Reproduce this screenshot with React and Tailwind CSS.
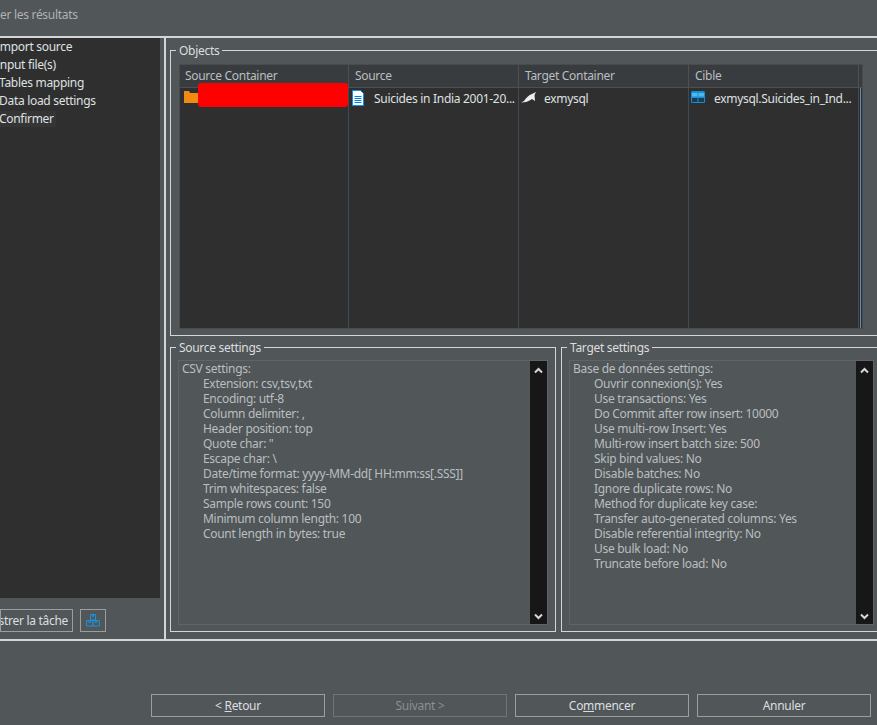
const sourceRows = [
  "Extension: csv,tsv,txt",
  "Encoding: utf-8",
  "Column delimiter: ,",
  "Header position: top",
  'Quote char: "',
  "Escape char: \\",
  "Date/time format: yyyy-MM-dd[ HH:mm:ss[.SSS]]",
  "Trim whitespaces: false",
  "Sample rows count: 150",
  "Minimum column length: 100",
  "Count length in bytes: true",
];

const targetRows = [
  "Ouvrir connexion(s): Yes",
  "Use transactions: Yes",
  "Do Commit after row insert: 10000",
  "Use multi-row Insert: Yes",
  "Multi-row insert batch size: 500",
  "Skip bind values: No",
  "Disable batches: No",
  "Ignore duplicate rows: No",
  "Method for duplicate key case:",
  "Transfer auto-generated columns: Yes",
  "Disable referential integrity: No",
  "Use bulk load: No",
  "Truncate before load: No",
];

const navItems = [
  { text: "Import source", classes: "-ml-[4px]" },
  { text: "Input file(s)", classes: "-ml-[4px]" },
  { text: "Tables mapping", classes: "-ml-[1px]" },
  { text: "Data load settings", classes: "-ml-[1px]" },
  { text: "Confirmer", classes: "-ml-[1px] pr-[2px] bg-[#353535]" },
];

const Chevron = ({ down }) => (
  <svg width="9" height="7" viewBox="0 0 9 7" className="shrink-0">
    <path
      d={down ? "M1 1.5l3.5 3.5L8 1.5" : "M1 5.5L4.5 2 8 5.5"}
      fill="none"
      stroke="#d8d8d8"
      strokeWidth="2"
    />
  </svg>
);

const SettingsBox = ({ title, heading, rows, classes }) => (
  <fieldset className={`border border-[#d4d6d6] pl-[7px] pb-[6px] ${classes}`}>
    <legend className="-ml-[2px] px-[3px] text-[#dcdedf] leading-[15px]">{title}</legend>
    <div className="flex h-[265px] border border-[#5f6466] mt-[5px]">
      <div className="flex-1 pl-[3px] text-[#b9bec0] leading-[15px] overflow-hidden">
        <div>{heading}</div>
        {rows.map((r) => (
          <div key={r} className="pl-[21px] whitespace-pre">{r}</div>
        ))}
      </div>
      <div className="w-[17px] bg-[#171717] flex flex-col items-center justify-between pt-[6px] pb-[4px]">
        <Chevron />
        <Chevron down />
      </div>
    </div>
  </fieldset>
);

const FooterButton = ({ children, disabled }) => (
  <button
    className={`w-[174px] h-[23px] border flex items-center justify-center ${
      disabled ? "border-[#6f7476] text-[#8b9092]" : "border-[#9a9e9f] text-[#dcdfe0]"
    }`}
  >
    {children}
  </button>
);

const App = () => {
  return (
    <div
      className="w-[877px] h-[725px] overflow-hidden bg-[#515658] flex flex-col text-[12px] tracking-[-0.3px]"
      style={{ fontFamily: '"Noto Sans", sans-serif' }}
    >
      <div className="h-[36px] pt-[7px] leading-[16px] text-[#aeb2b4]">er les résultats</div>

      <div className="h-[605px] flex border-y-2 border-[#d4d6d6]">
        <div className="flex flex-col border-r-2 border-[#d4d6d6] shrink-0 w-[166px]">
          <div className="w-[160px] h-[560px] bg-[#2f2f2f] pt-[1px] overflow-hidden text-[#dfe1e2]">
            {navItems.map((n) => (
              <div key={n.text} className="h-[18px] leading-[16px]">
                <span className={`inline-block ${n.classes}`}>{n.text}</span>
              </div>
            ))}
          </div>
          <div className="flex gap-[7px] mt-[11px]">
            <button className="w-[73px] h-[23px] border border-[#9a9e9f] text-[#dcdfe0] flex items-center justify-end pr-[4px] overflow-hidden whitespace-nowrap">
              istrer la tâche
            </button>
            <button className="w-[26px] h-[23px] border border-[#9a9e9f] flex items-center justify-center">
              <svg width="14" height="13" viewBox="0 0 14 13" fill="none" stroke="#1e8fd8">
                <path d="M4.5.5h5v5.500h-5zM6.500.5v2h1v-2M.5 6.500h6.500v5.500H.5zM7 6.500h6.500v5.500H7zM3 6.500v2h1.500v-2M9.500 6.500v2H11v-2" />
              </svg>
            </button>
          </div>
        </div>

        <div className="flex-1 pl-[4px] flex flex-col overflow-hidden">
          <fieldset className="border border-[#d4d6d6] -mr-[4px] pl-[8px] h-[293px] mt-[5px]">
            <legend className="-ml-[3px] px-[3px] text-[#dcdedf] leading-[15px]">Objects</legend>
            <div className="w-[684px] h-[265px] mt-[6px] border border-[#484c4e] bg-[#2f2f2f] grid grid-cols-[169px_170px_170px_170px_1fr] grid-rows-[23px_1fr] text-[#dfe1e2]">
              <div className="bg-[#393c3e] border-b border-r border-[#4c5052] pl-[5px] leading-[22px] text-[#b9bec0]">Source Container</div>
              <div className="bg-[#393c3e] border-b border-r border-[#4c5052] pl-[6px] leading-[22px] text-[#b9bec0]">Source</div>
              <div className="bg-[#393c3e] border-b border-r border-[#4c5052] pl-[6px] leading-[22px] text-[#b9bec0]">Target Container</div>
              <div className="bg-[#393c3e] border-b border-r border-[#4c5052] pl-[6px] leading-[22px] text-[#b9bec0]">Cible</div>
              <div className="bg-[#393c3e] border-b border-[#4c5052]" />

              <div className="relative border-r border-[#3e4a56] pl-[4px] pt-[3px]">
                <svg width="14" height="12" viewBox="0 0 14 12">
                  <path d="M0 0h5l1 2h8v10H0z" fill="#f08a12" />
                </svg>
                <div className="absolute left-[18px] -top-[5px] w-[150px] h-[24px] bg-[#ff0000] rounded-[3px]" />
              </div>
              <div className="border-r border-[#3e4a56] flex items-start pl-[3px] pt-[2px] gap-[10px]">
                <svg width="12" height="16" viewBox="0 0 12 16" className="shrink-0">
                  <path d="M.5.5h8l3 3v12H.5z" fill="#fff" stroke="#1290e8" />
                  <path d="M2.500 6.500h7M2.500 8.500h7M2.500 10.500h7M2.500 12.500h7" stroke="#0a7fd8" />
                </svg>
                <span className="leading-[15px] mt-[1px] whitespace-nowrap">Suicides in India 2001-20...</span>
              </div>
              <div className="border-r border-[#3e4a56] flex items-start pl-[2px] pt-[3px] gap-[8px]">
                <svg width="15" height="11" viewBox="0 0 15 11" className="shrink-0 mt-[1px]">
                  <path d="M0 10.500L3 9C5 6 8 3 11 2L15 0L13.500 3L14 9L11 7C8 9.500 4 10.500 0 10.500z" fill="#eee" />
                </svg>
                <span className="leading-[15px]">exmysql</span>
              </div>
              <div className="border-r border-[#3e4a56] flex items-start pl-[2px] pt-[3px] gap-[9px]">
                <svg width="14" height="12" viewBox="0 0 14 12" className="shrink-0">
                  <rect width="14" height="12" rx="1.500" fill="#1590d8" />
                  <path d="M1 2h5.500v3.500H1zM7.500 2H13v3.500H7.500z" fill="#4cb8ee" />
                  <path d="M1 7h5.500v4H1zM7.500 7H13v4H7.500z" fill="#1f3a4c" />
                </svg>
                <span className="leading-[15px] whitespace-nowrap">exmysql.Suicides_in_Ind...</span>
              </div>
              <div className="relative">
                <div className="w-[1px] h-full bg-[#5f8bb8] ml-[1px]" />
              </div>
            </div>
          </fieldset>

          <div className="flex gap-[5px] mt-[4px] -mr-[4px]">
            <SettingsBox title="Source settings" heading="CSV settings:" rows={sourceRows} classes="w-[386px] shrink-0 pr-[7px]" />
            <SettingsBox title="Target settings" heading="Base de données settings:" rows={targetRows} classes="flex-1 pr-[6px]" />
          </div>
        </div>
      </div>

      <div className="flex gap-[8px] pl-[151px] mt-[53px]">
        <FooterButton>
          &lt;&nbsp;<u>R</u>etour
        </FooterButton>
        <FooterButton disabled>Suivant &gt;</FooterButton>
        <FooterButton>
          Co<u>m</u>mencer
        </FooterButton>
        <FooterButton>Annuler</FooterButton>
      </div>
    </div>
  );
};

export default App;
